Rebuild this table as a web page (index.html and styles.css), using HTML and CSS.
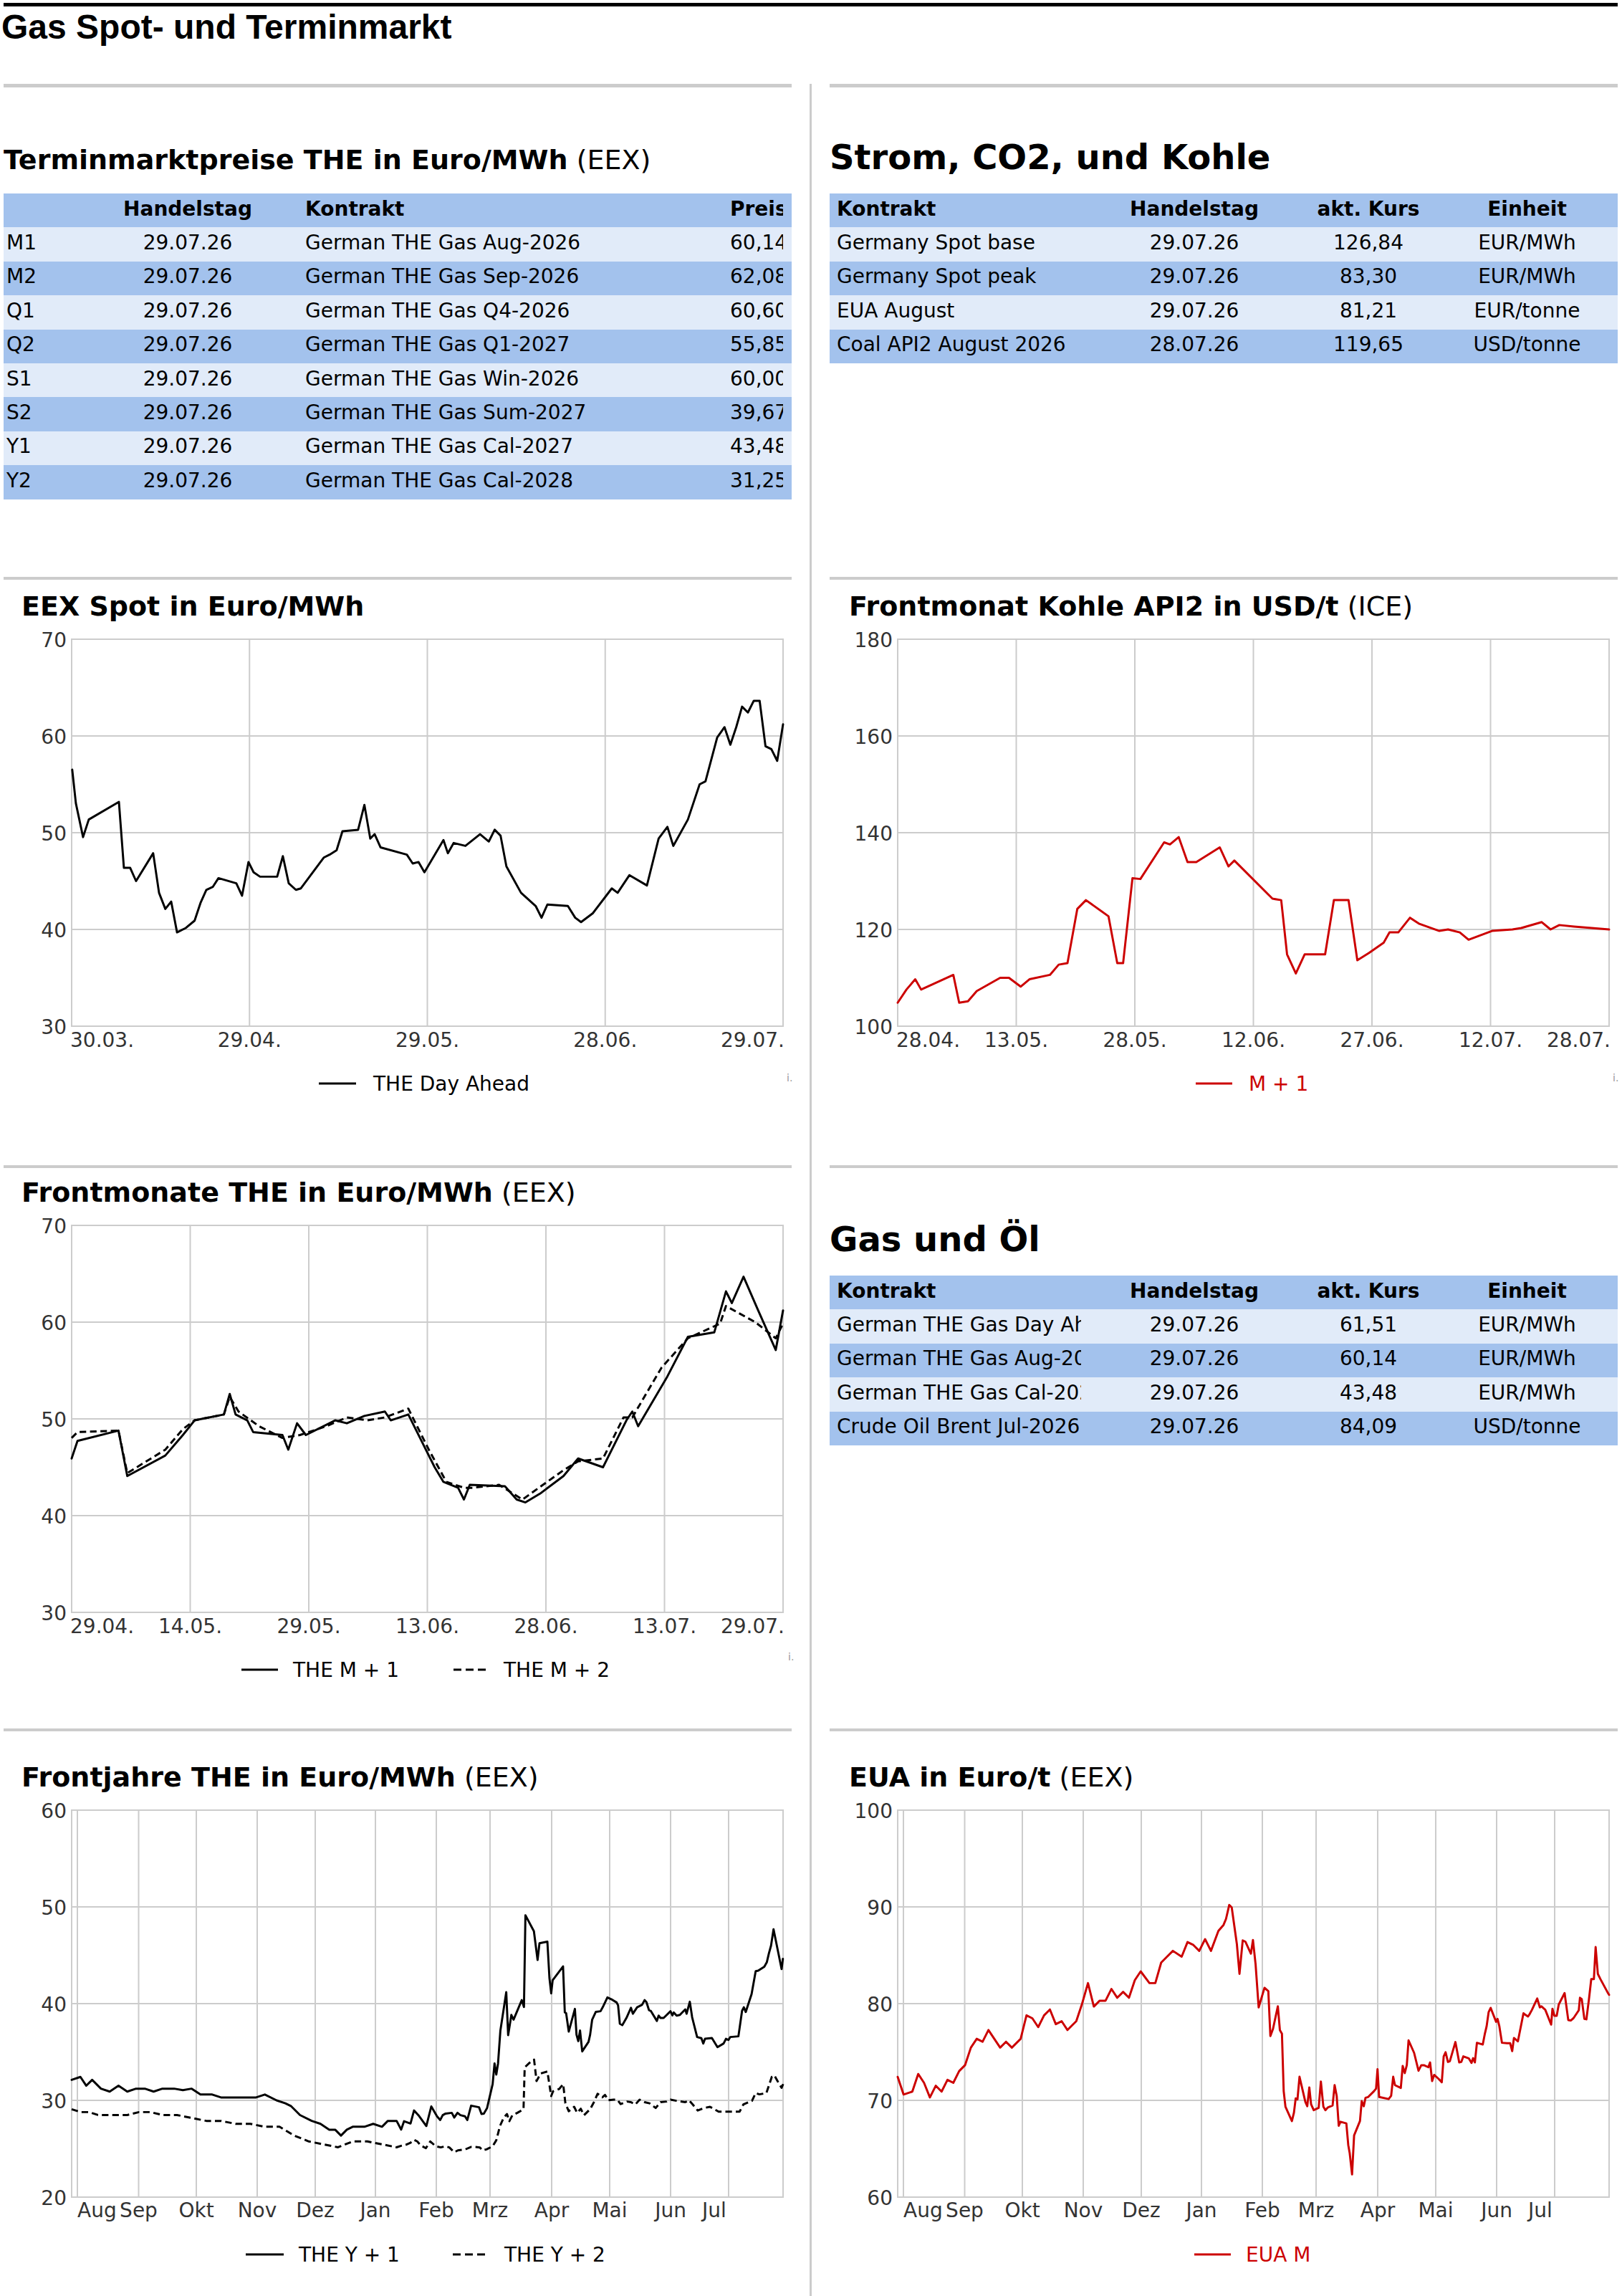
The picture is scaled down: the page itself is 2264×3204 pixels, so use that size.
FILE: index.html
```html
<!DOCTYPE html>
<html lang="de">
<head>
<meta charset="utf-8">
<title>Gas Spot- und Terminmarkt</title>
<link rel="stylesheet" href="styles.css">
</head>
<body>
<div class="page">
  <header class="masthead"><h1 class="title">Gas Spot- und Terminmarkt</h1></header>
  <main class="board">
    <!-- Row 1 -->
    <div class="lc r1"><section class="sec">
      <h3 class="h3"><b>Terminmarktpreise THE in Euro/MWh</b> (EEX)</h3>
      <table class="tbl">
        <colgroup><col class="w95"><col class="w324"><col class="w585"><col class="w96"></colgroup>
        <thead><tr class="dk"><th class="lab"></th><th class="ctr">Handelstag</th><th class="con">Kontrakt</th><th class="pr"><div class="clip">Preis</div></th></tr></thead>
        <tbody>
          <tr class="lt"><td class="lab">M1</td><td class="ctr">29.07.26</td><td class="con">German THE Gas Aug-2026</td><td class="pr"><div class="clip">60,14</div></td></tr>
          <tr class="dk"><td class="lab">M2</td><td class="ctr">29.07.26</td><td class="con">German THE Gas Sep-2026</td><td class="pr"><div class="clip">62,08</div></td></tr>
          <tr class="lt"><td class="lab">Q1</td><td class="ctr">29.07.26</td><td class="con">German THE Gas Q4-2026</td><td class="pr"><div class="clip">60,60</div></td></tr>
          <tr class="dk"><td class="lab">Q2</td><td class="ctr">29.07.26</td><td class="con">German THE Gas Q1-2027</td><td class="pr"><div class="clip">55,85</div></td></tr>
          <tr class="lt"><td class="lab">S1</td><td class="ctr">29.07.26</td><td class="con">German THE Gas Win-2026</td><td class="pr"><div class="clip">60,00</div></td></tr>
          <tr class="dk"><td class="lab">S2</td><td class="ctr">29.07.26</td><td class="con">German THE Gas Sum-2027</td><td class="pr"><div class="clip">39,67</div></td></tr>
          <tr class="lt"><td class="lab">Y1</td><td class="ctr">29.07.26</td><td class="con">German THE Gas Cal-2027</td><td class="pr"><div class="clip">43,48</div></td></tr>
          <tr class="dk"><td class="lab">Y2</td><td class="ctr">29.07.26</td><td class="con">German THE Gas Cal-2028</td><td class="pr"><div class="clip">31,25</div></td></tr>
        </tbody>
      </table>
    </section></div>
    <div class="rc r1"><section class="sec">
      <h2 class="h2">Strom, CO2, und Kohle</h2>
      <table class="tbl">
        <colgroup><col class="w367"><col class="w284"><col class="w202"><col class="w247"></colgroup>
        <thead><tr class="dk"><th class="k"><div class="clip">Kontrakt</div></th><th class="ctr">Handelstag</th><th class="ctr">akt. Kurs</th><th class="ctr unit">Einheit</th></tr></thead>
        <tbody>
          <tr class="lt"><td class="k"><div class="clip">Germany Spot base</div></td><td class="ctr">29.07.26</td><td class="ctr">126,84</td><td class="ctr unit">EUR/MWh</td></tr>
          <tr class="dk"><td class="k"><div class="clip">Germany Spot peak</div></td><td class="ctr">29.07.26</td><td class="ctr">83,30</td><td class="ctr unit">EUR/MWh</td></tr>
          <tr class="lt"><td class="k"><div class="clip">EUA August</div></td><td class="ctr">29.07.26</td><td class="ctr">81,21</td><td class="ctr unit">EUR/tonne</td></tr>
          <tr class="dk"><td class="k"><div class="clip">Coal API2 August 2026</div></td><td class="ctr">28.07.26</td><td class="ctr">119,65</td><td class="ctr unit">USD/tonne</td></tr>
        </tbody>
      </table>
    </section></div>

    <!-- Row 2 -->
    <div class="lc r2"><section class="sec">
      <svg class="chart" width="1100" height="740" viewBox="0 0 1100 740">
        <text class="ttl" x="25" y="50"><tspan class="b">EEX Spot in Euro/MWh</tspan></text>
        <g class="grid">
          <line x1="95" y1="218" x2="1088" y2="218"/><line x1="95" y1="353" x2="1088" y2="353"/><line x1="95" y1="488" x2="1088" y2="488"/>
          <line x1="343.25" y1="83" x2="343.25" y2="623"/><line x1="591.5" y1="83" x2="591.5" y2="623"/><line x1="839.75" y1="83" x2="839.75" y2="623"/>
          <rect x="95" y="83" width="993" height="540"/>
        </g>
        <g class="yl"><text x="88" y="93.5">70</text><text x="88" y="228.5">60</text><text x="88" y="363.5">50</text><text x="88" y="498.5">40</text><text x="88" y="633.5">30</text></g>
        <g class="xl"><text class="st" x="93" y="652">30.03.</text><text x="343.25" y="652">29.04.</text><text x="591.5" y="652">29.05.</text><text x="839.75" y="652">28.06.</text><text class="en" x="1090" y="652">29.07.</text></g>
        <g transform="translate(95 83) scale(2.0432 2.0455) translate(-49 -437)">
          <polyline class="s" points="49.4,526 51.9,549 56.8,572 60.7,560 81.3,548 84.7,593 89,593 93,602 104.7,583 108.7,610 113,621 117,616 121,637 127,634 133,629 137,617 141,608 145.4,606 149.3,600 161.5,603.5 165.4,612 169.8,589 173.3,596 177.7,599 189.4,599 193.3,585 197.3,603.5 202.2,608 205.6,607 221.2,586 225.2,584 230,581 234,568 244.7,567 249,550 253,573 256,570 260,579 278,584 282,590 286,589 290,596 303,574 306,583 310,576 318,578 328,570 334,575 338,567 342,571 346,592 356,610 366,619 370,627 374,618 388,619 393,627 397,630 405,624 418,607 422,610 430,598 442,605 450,573 456,565 460,578 470,560 478,536 482,534 490,504 495,497 499,509 503,497 507,483 511,487 515,479 519,479 523,510 527,512 531,520 535,495"/>
        </g>
        <line class="lgl" x1="440" y1="703" x2="492" y2="703"/>
        <text class="lg" x="516" y="713">THE Day Ahead</text>
        <text class="credit" x="1093" y="700">i.</text>
      </svg>
    </section></div>
    <div class="rc r2"><section class="sec">
      <svg class="chart" width="1100" height="740" viewBox="0 0 1100 740">
        <text class="ttl" x="27" y="50"><tspan class="b">Frontmonat Kohle API2 in USD/t</tspan> (ICE)</text>
        <g class="grid">
          <line x1="95" y1="218" x2="1088" y2="218"/><line x1="95" y1="353" x2="1088" y2="353"/><line x1="95" y1="488" x2="1088" y2="488"/>
          <line x1="260.5" y1="83" x2="260.5" y2="623"/><line x1="426" y1="83" x2="426" y2="623"/><line x1="591.5" y1="83" x2="591.5" y2="623"/><line x1="757" y1="83" x2="757" y2="623"/><line x1="922.5" y1="83" x2="922.5" y2="623"/>
          <rect x="95" y="83" width="993" height="540"/>
        </g>
        <g class="yl"><text x="88" y="93.5">180</text><text x="88" y="228.5">160</text><text x="88" y="363.5">140</text><text x="88" y="498.5">120</text><text x="88" y="633.5">100</text></g>
        <g class="xl"><text class="st" x="93" y="652">28.04.</text><text x="260.5" y="652">13.05.</text><text x="426" y="652">28.05.</text><text x="591.5" y="652">12.06.</text><text x="757" y="652">27.06.</text><text x="922.5" y="652">12.07.</text><text class="en" x="1090" y="652">28.07.</text></g>
        <g transform="translate(95 83) scale(2.0432 2.0455) translate(-613 -437)">
          <polyline class="s red" points="613,685 619,676 625,669 629,676 651,666 655,685 661,684 667,677 683,668 689,668 697,674 703,669 717,666 723,659 729,658 735.7,621 741.6,615 757,626 763,658 767,658 773.4,600 778.8,600.6 795,575.6 799,577 805,572 811,589 817,589 833,579 839,592 843,588 869,614 875,615 879,652 885,665 891,652 905,652 911,615 921,615 927,656 935,651 945,644 949,637 955,637 963,627 969,631 983,636 989,635 997,637 1003,642 1019,636 1033,635 1039,634 1053,630 1059,635 1065,632 1075,633 1099,635"/>
        </g>
        <line class="lgl red" x1="511" y1="703" x2="562" y2="703"/>
        <text class="lg redt" x="585" y="713">M + 1</text>
        <text class="credit" x="1093" y="700">i.</text>
      </svg>
    </section></div>

    <!-- Row 3 -->
    <div class="lc r3"><section class="sec">
      <svg class="chart" width="1100" height="740" viewBox="0 0 1100 740">
        <text class="ttl" x="25" y="50"><tspan class="b">Frontmonate THE in Euro/MWh</tspan> (EEX)</text>
        <g class="grid">
          <line x1="95" y1="218" x2="1088" y2="218"/><line x1="95" y1="353" x2="1088" y2="353"/><line x1="95" y1="488" x2="1088" y2="488"/>
          <line x1="260.5" y1="83" x2="260.5" y2="623"/><line x1="426" y1="83" x2="426" y2="623"/><line x1="591.5" y1="83" x2="591.5" y2="623"/><line x1="757" y1="83" x2="757" y2="623"/><line x1="922.5" y1="83" x2="922.5" y2="623"/>
          <rect x="95" y="83" width="993" height="540"/>
        </g>
        <g class="yl"><text x="88" y="93.5">70</text><text x="88" y="228.5">60</text><text x="88" y="363.5">50</text><text x="88" y="498.5">40</text><text x="88" y="633.5">30</text></g>
        <g class="xl"><text class="st" x="93" y="652">29.04.</text><text x="260.5" y="652">14.05.</text><text x="426" y="652">29.05.</text><text x="591.5" y="652">13.06.</text><text x="757" y="652">28.06.</text><text x="922.5" y="652">13.07.</text><text class="en" x="1090" y="652">29.07.</text></g>
        <g transform="translate(95 83) scale(2.0432 2.0455) translate(-49 -837)">
          <polyline class="s dash" points="49,982 53,978 81,977 87,1006 113,990 125,976 133,970 153,966 157,954 163,964 177,974 193,982 205,980 223,974 237,968 251,970 263,968 279,962 293,990 305,1012 317,1016 323,1016 341,1014 357,1024 371,1014 385,1004 395,998 412,996 426,968 432,968 452,934 470,914 492,904 496,892 516,903 530,914 535,904"/>
          <polyline class="s" points="49,996 53,984 81,977 87,1008 113,994 125,980 133,970 153,966 157,952 161,966 169,970 173,978 193,980 197,990 203,972 209,980 229,970 237,972 249,967 263,964 267,970 279,966 287,982 297,1002 303,1012 313,1016 317,1024 321,1014 345,1015 353,1024 359,1026 369,1020 385,1008 395,996 412,1002 428,970 432,964 436,974 456,940 470,913 488,910 496,882 500,890 508,872 518,895 530,922 535,895"/>
        </g>
        <line class="lgl" x1="332" y1="703" x2="383" y2="703"/>
        <text class="lg" x="404" y="713">THE M + 1</text>
        <line class="lgl lgd" x1="628" y1="703" x2="675" y2="703"/>
        <text class="lg" x="698" y="713">THE M + 2</text>
        <text class="credit" x="1095" y="690">i.</text>
      </svg>
    </section></div>
    <div class="rc r3"><section class="sec">
      <h2 class="h2">Gas und Öl</h2>
      <table class="tbl">
        <colgroup><col class="w367"><col class="w284"><col class="w202"><col class="w247"></colgroup>
        <thead><tr class="dk"><th class="k"><div class="clip">Kontrakt</div></th><th class="ctr">Handelstag</th><th class="ctr">akt. Kurs</th><th class="ctr unit">Einheit</th></tr></thead>
        <tbody>
          <tr class="lt"><td class="k"><div class="clip">German THE Gas Day Ahead</div></td><td class="ctr">29.07.26</td><td class="ctr">61,51</td><td class="ctr unit">EUR/MWh</td></tr>
          <tr class="dk"><td class="k"><div class="clip">German THE Gas Aug-2026</div></td><td class="ctr">29.07.26</td><td class="ctr">60,14</td><td class="ctr unit">EUR/MWh</td></tr>
          <tr class="lt"><td class="k"><div class="clip">German THE Gas Cal-2027</div></td><td class="ctr">29.07.26</td><td class="ctr">43,48</td><td class="ctr unit">EUR/MWh</td></tr>
          <tr class="dk"><td class="k"><div class="clip">Crude Oil Brent Jul-2026</div></td><td class="ctr">29.07.26</td><td class="ctr">84,09</td><td class="ctr unit">USD/tonne</td></tr>
        </tbody>
      </table>
    </section></div>

    <!-- Row 4 -->
    <div class="lc r4"><section class="sec">
      <svg class="chart" width="1100" height="740" viewBox="0 0 1100 740">
        <text class="ttl" x="25" y="50"><tspan class="b">Frontjahre THE in Euro/MWh</tspan> (EEX)</text>
        <g class="grid">
          <line x1="95" y1="218" x2="1088" y2="218"/><line x1="95" y1="353" x2="1088" y2="353"/><line x1="95" y1="488" x2="1088" y2="488"/>
          <line x1="103" y1="83" x2="103" y2="623"/><line x1="188.5" y1="83" x2="188.5" y2="623"/><line x1="269" y1="83" x2="269" y2="623"/><line x1="354" y1="83" x2="354" y2="623"/><line x1="435" y1="83" x2="435" y2="623"/><line x1="519" y1="83" x2="519" y2="623"/><line x1="604" y1="83" x2="604" y2="623"/><line x1="679" y1="83" x2="679" y2="623"/><line x1="765" y1="83" x2="765" y2="623"/><line x1="846" y1="83" x2="846" y2="623"/><line x1="931" y1="83" x2="931" y2="623"/><line x1="1012" y1="83" x2="1012" y2="623"/>
          <rect x="95" y="83" width="993" height="540"/>
        </g>
        <g class="yl"><text x="88" y="93.5">60</text><text x="88" y="228.5">50</text><text x="88" y="363.5">40</text><text x="88" y="498.5">30</text><text x="88" y="633.5">20</text></g>
        <g class="xl"><text class="st" x="103" y="651">Aug</text><text x="188.5" y="651">Sep</text><text x="269" y="651">Okt</text><text x="354" y="651">Nov</text><text x="435" y="651">Dez</text><text x="519" y="651">Jan</text><text x="604" y="651">Feb</text><text x="679" y="651">Mrz</text><text x="765" y="651">Apr</text><text x="846" y="651">Mai</text><text x="931" y="651">Jun</text><text x="992" y="651">Jul</text></g>
        <g transform="translate(95 83) scale(2.0432 2.0455) translate(-49 -1236)">
          <polyline class="s dash" points="49,1440 55,1442 61,1442 67,1444 73,1444 81,1444 87,1444 95,1442 103,1442 111,1444 121,1444 131,1446 141,1448 151,1448 161,1450 171,1450 181,1452 191,1452 201,1458 211,1462 221,1464 231,1466 241,1462 251,1462 261,1464 271,1466 274.1,1465 277.5,1464.2 280.5,1462.9 282.9,1460.9 285.1,1462 287.6,1464.8 291,1466.6 294,1462 297.7,1465.3 301.1,1466.1 304.2,1465.3 307,1466.1 310.4,1469.4 312.9,1468.1 318,1467.4 321.7,1465.8 324.7,1465.8 327.8,1466.1 329.8,1468.1 332.4,1467.4 336.6,1465.3 339.1,1461.2 341.6,1451.5 344.2,1445.7 346.4,1443.3 348,1448.2 350.1,1444.1 353.5,1442.5 357.7,1440 358.5,1411.5 361.9,1408.3 364.9,1406.2 366.6,1420.8 369.5,1415.6 374,1414.3 376.6,1431.1 377.9,1427.8 382.1,1426.2 384.8,1422.9 386.3,1436 388.6,1441.4 392.3,1438.4 394.3,1442.5 396.8,1439.7 399,1444.1 403.2,1440 405.8,1435.2 408.3,1429.5 411.6,1431.9 413.4,1430.3 415.6,1433.9 419.3,1433.5 421.8,1433.5 424,1436.5 428.5,1434.8 431.1,1435.2 434.1,1436.8 437,1433.5 440.4,1435.2 443.8,1436 448,1439.2 451.3,1435.2 455.5,1434.8 458.1,1433.5 462.3,1434.3 468.2,1435.2 470.7,1433.9 473.3,1436.8 476.7,1440.9 480.9,1439.2 485.1,1438.4 491,1441.7 496.9,1441.7 505.3,1441.7 507.9,1436.8 513.8,1434.3 516.3,1429 518.8,1429.9 523.6,1429 527.3,1418 529,1416.9 531.5,1421.3 534,1425.4 535.4,1422.1"/>
          <polyline class="s" points="49,1420 55,1418 59,1424 63,1420 69,1426 75,1428 81,1424 87,1428 93,1426 99,1426 105,1428 111,1426 119,1426 125,1427 131,1426 137,1430 145,1430 151,1432 163,1432 175,1432 181,1430 189,1434 195,1436 199,1438 205,1444 213,1448 219,1450 225,1454 229,1454 233,1458 237,1454 241,1452 249,1452 255,1450 261,1452 265,1448 271,1448 274.1,1453.9 276.1,1448.2 280.5,1449.8 282.9,1440.9 285.9,1444.1 291.3,1451.5 294.7,1438.1 298.6,1444.9 300.8,1447.4 302.5,1444.1 304.5,1443 308.7,1442.5 310.4,1445.7 312.6,1442.5 314.6,1444.1 317.7,1444.9 319.3,1447.4 321.9,1437.6 327.3,1438.7 329,1443.3 330.6,1443 332.8,1439.2 336.6,1422.9 337.9,1408.8 339.1,1416.4 340.3,1408.8 341.9,1386.3 345.9,1360.2 347.2,1389.5 349.4,1375.7 350.9,1378.9 356.5,1365.6 358,1370.3 359,1307.7 364.8,1318.6 367.3,1338.2 368.6,1326.8 374,1325.7 375.4,1350.4 376.6,1361 377.6,1352 384.7,1342.6 385.9,1374 386.8,1374.5 388.6,1387.1 392.8,1371.6 393.9,1389.2 395.1,1393.6 396.3,1386.3 397.8,1400.6 402.1,1394.1 403.2,1389.2 404.6,1378.9 407.1,1373.6 410.3,1373.2 412.2,1369.7 415,1363.8 418.4,1365.4 421.3,1367.2 422.3,1369.2 423.5,1381.7 425.2,1382.7 428,1377.8 431.1,1370.8 432.4,1374.9 435.3,1370.5 438.7,1368.8 440.4,1365.6 441.7,1367 443.4,1372.4 444.6,1372.9 448.8,1379.8 450,1376.2 451.3,1377.8 453.4,1377.8 458.1,1373.2 459.4,1376 460.3,1374 462.3,1376.2 464.5,1375.7 468.2,1371.9 469.1,1374.9 471.3,1366.7 472.9,1377.3 476.3,1390.8 479.2,1391.6 480.5,1395.2 481.7,1392 486.4,1391.5 490.2,1397.7 494.4,1395.2 496,1392 497.7,1392.8 498.9,1390.8 504.5,1390.3 507,1372.9 508.2,1370.5 509.5,1373.7 513.5,1361.5 516.3,1345.9 518,1345.5 522.2,1342.8 523.9,1339.8 525.3,1333.8 526.8,1328.4 528.5,1317.3 534,1344.4 534.9,1337.4"/>
        </g>
        <line class="lgl" x1="338" y1="703" x2="391" y2="703"/>
        <text class="lg" x="412" y="713">THE Y + 1</text>
        <line class="lgl lgd" x1="627" y1="703" x2="674" y2="703"/>
        <text class="lg" x="699" y="713">THE Y + 2</text>
      </svg>
    </section></div>
    <div class="rc r4"><section class="sec">
      <svg class="chart" width="1100" height="740" viewBox="0 0 1100 740">
        <text class="ttl" x="27" y="50"><tspan class="b">EUA in Euro/t</tspan> (EEX)</text>
        <g class="grid">
          <line x1="95" y1="218" x2="1088" y2="218"/><line x1="95" y1="353" x2="1088" y2="353"/><line x1="95" y1="488" x2="1088" y2="488"/>
          <line x1="103" y1="83" x2="103" y2="623"/><line x1="188.5" y1="83" x2="188.5" y2="623"/><line x1="269" y1="83" x2="269" y2="623"/><line x1="354" y1="83" x2="354" y2="623"/><line x1="435" y1="83" x2="435" y2="623"/><line x1="519" y1="83" x2="519" y2="623"/><line x1="604" y1="83" x2="604" y2="623"/><line x1="679" y1="83" x2="679" y2="623"/><line x1="765" y1="83" x2="765" y2="623"/><line x1="846" y1="83" x2="846" y2="623"/><line x1="931" y1="83" x2="931" y2="623"/><line x1="1012" y1="83" x2="1012" y2="623"/>
          <rect x="95" y="83" width="993" height="540"/>
        </g>
        <g class="yl"><text x="88" y="93.5">100</text><text x="88" y="228.5">90</text><text x="88" y="363.5">80</text><text x="88" y="498.5">70</text><text x="88" y="633.5">60</text></g>
        <g class="xl"><text class="st" x="103" y="651">Aug</text><text x="188.5" y="651">Sep</text><text x="269" y="651">Okt</text><text x="354" y="651">Nov</text><text x="435" y="651">Dez</text><text x="519" y="651">Jan</text><text x="604" y="651">Feb</text><text x="679" y="651">Mrz</text><text x="765" y="651">Apr</text><text x="846" y="651">Mai</text><text x="931" y="651">Jun</text><text x="992" y="651">Jul</text></g>
        <g transform="translate(95 83) scale(2.0432 2.0455) translate(-613 -1236)">
          <polyline class="s red" points="613,1418 617,1430 623,1428 627,1416 631,1422 635,1432 639,1424 643,1428 647,1420 651,1422 655,1414 659,1410 663,1398 667,1392 671,1394 675,1386 679,1392 683,1398 687,1394 691,1398 697,1392 701,1376 705,1378 709,1384 713,1376 717,1372 721,1382 725,1380 729,1386 735,1380 739,1368 743,1354 747,1370 751,1366 755,1366 759,1358 763,1364 767,1360 771,1364 775,1352 779,1346 785,1354 789,1354 793,1340 797,1336 801,1332 807,1336 811,1326 815,1328 819,1332 823,1324 827,1332 832.1,1318.4 835.6,1314.3 837.3,1310.2 839.5,1300.7 841.2,1302.4 844.7,1327.3 846.5,1347.7 848.7,1324.9 850.5,1325.7 854.3,1333.9 855.7,1324.6 857.5,1341.2 859.6,1370.6 863.6,1357.2 866.2,1359.5 867.6,1390.1 869.4,1385.2 872.7,1369.8 874.1,1386.1 875.5,1388.5 876.7,1427.7 877.9,1438.3 882.3,1448.1 883.7,1442.4 884.9,1432.6 886.1,1433.4 887.5,1417.9 891.5,1435 892.8,1438 894.2,1425.2 895.4,1436.6 897.2,1440.7 900.6,1439.1 902.1,1421.1 903.8,1438.3 905.2,1440.7 906.9,1438.8 910.1,1437.5 911.5,1423.6 912.9,1430.9 914.3,1451.3 915.5,1448.6 919.5,1449.7 920.8,1464.4 921.8,1470.1 923.4,1484.5 924.8,1457.9 928.8,1448.1 930,1434.5 931.4,1438 932.6,1432.2 934.4,1431.7 938.4,1427.7 939.8,1426 940.8,1412.7 941.9,1431.7 948.4,1433.1 950.1,1430.9 951.5,1417.9 952.7,1423.6 956.7,1425.5 958,1410.5 959.4,1415.4 960.8,1410 962,1393.1 965.8,1401.6 968.8,1413.8 970.7,1410 972.5,1410 975.5,1411.4 976.7,1408.1 978.1,1420.8 979.5,1416.6 982.4,1419.2 984.7,1421.6 986,1404 987.3,1401.2 988.9,1407.8 990.2,1407.3 994,1394.2 996.6,1408.1 998,1407.8 999.4,1404 1003.1,1405.3 1005,1408.4 1006.1,1405.2 1007.3,1408.1 1008.7,1394.7 1012.7,1395.9 1014.2,1388.2 1015.3,1383.6 1016.7,1373.8 1018.1,1370.9 1021.8,1380.4 1022.8,1378.4 1024,1383.3 1025.8,1394.7 1029.3,1395 1031.4,1395 1032.8,1400.4 1034,1391.4 1036.7,1393.7 1040.5,1374.6 1041.6,1375.5 1043.6,1376.8 1044.8,1375 1046.3,1372.2 1049.9,1364.5 1051.7,1370.6 1052.7,1369.8 1055.4,1372.2 1059.4,1382.3 1060.3,1371.5 1061.6,1376.3 1063.2,1376.3 1064.6,1368.6 1068.6,1360.8 1071.1,1379.2 1072.8,1379.5 1074.7,1377.9 1078.3,1372.5 1079.1,1364 1080.3,1364.9 1082.1,1378.4 1083.5,1378.7 1085.2,1365.3 1086.8,1351.3 1088.6,1351.3 1089.8,1329.4 1091.3,1347.7 1093.1,1351.3 1097.8,1360 1099,1362"/>
        </g>
        <line class="lgl red" x1="509" y1="703" x2="560" y2="703"/>
        <text class="lg redt" x="581" y="713">EUA M</text>
      </svg>
    </section></div>
  </main>
</div>
</body>
</html>
```

FILE: styles.css
```css
html, body {
  margin: 0;
  padding: 0;
  background: #fff;
}

body {
  font-family: "DejaVu Sans", "Noto Sans", sans-serif;
  font-size: 28px;
  color: #000;
}

.page {
  width: 2264px;
  box-sizing: border-box;
  padding: 0 6px 0 5px;
}

/* Header */
.masthead {
  margin-top: 4px;
  border-top: 5px solid #000;
  height: 108px;
}

.title {
  font-family: "Liberation Sans", Arial, sans-serif;
  font-weight: bold;
  font-size: 48px;
  line-height: 54px;
  margin: 2px 0 0 -3px;
}

/* Two column board */
.board {
  display: grid;
  grid-template-columns: 1100px 1153px;
  grid-template-rows: 688px 821px 786px 818px;
}

.lc {
  width: 1100px;
}

.rc {
  margin-left: 25px;
  border-left: 3px solid #ccc;
  padding-left: 25px;
  width: 1100px;
}

.sec {
  border-top: 4px solid #ccc;
}

.r1 .sec {
  border-top-width: 5px;
}

/* Headings */
.h3 {
  font-size: 38px;
  line-height: 44px;
  font-weight: normal;
  margin: 79px 0 25px;
  white-space: nowrap;
}

.h3 b {
  font-weight: bold;
}

.h2 {
  font-size: 48px;
  line-height: 56px;
  font-weight: bold;
  margin: 69px 0 23px;
  white-space: nowrap;
}

.r3 .h2 {
  margin-top: 71px;
}

/* Tables */
.tbl {
  width: 1100px;
  border-collapse: collapse;
  border-spacing: 0;
  table-layout: fixed;
  font-size: 28px;
}

.tbl th,
.tbl td {
  padding: 4.5px 0 9.5px;
  line-height: 33.4px;
  white-space: nowrap;
  text-align: left;
  font-weight: normal;
  overflow: hidden;
}

.tbl th {
  font-weight: bold;
}

.tbl .dk {
  background: #a3c2ed;
}

.tbl .lt {
  background: #e1ebf9;
}

.w95 { width: 95px; }
.w324 { width: 324px; }
.w585 { width: 585px; }
.w96 { width: 96px; }
.w367 { width: 367px; }
.w284 { width: 284px; }
.w202 { width: 202px; }
.w247 { width: 247px; }

.tbl .lab { padding-left: 4px; }
.tbl .con { padding-left: 2px; }
.tbl .pr { padding-left: 10px; padding-right: 9px; }
.tbl .k { padding-left: 10px; padding-right: 10px; }
.tbl .ctr { text-align: center; }
.tbl .unit { padding-right: 6px; }

.clip {
  overflow: hidden;
  white-space: nowrap;
}

.tbl .pr .clip { width: 74px; }
.tbl .k .clip { width: 341px; }

/* Charts */
.chart {
  display: block;
  overflow: visible;
  font-family: "DejaVu Sans", sans-serif;
}

.r3 .chart { margin-top: -3px; }
.r4 .chart { margin-top: 27px; }

.chart .ttl {
  font-size: 38px;
  fill: #000;
}

.chart .ttl .b {
  font-weight: bold;
}

.chart .grid {
  stroke: #ccc;
  stroke-width: 2;
  fill: none;
}

.chart .yl {
  font-size: 28px;
  fill: #333;
  text-anchor: end;
}

.chart .xl {
  font-size: 28px;
  fill: #333;
  text-anchor: middle;
}

.chart .xl .st { text-anchor: start; }
.chart .xl .en { text-anchor: end; }

.chart .lg {
  font-size: 28px;
  fill: #000;
}

.chart .lg.redt { fill: #cc0000; }

.chart .s {
  fill: none;
  stroke: #000;
  stroke-width: 1.45;
  stroke-linejoin: round;
  stroke-linecap: round;
}

.chart .s.red { stroke: #cc0000; }
.chart .s.dash { stroke-dasharray: 4.5 2.6; stroke-linecap: butt; }

.chart .lgl {
  stroke: #000;
  stroke-width: 2.8;
}

.chart .lgl.red { stroke: #cc0000; }
.chart .lgl.lgd { stroke-dasharray: 11 6; }

.chart .credit {
  font-size: 14px;
  fill: #999;
}
```
